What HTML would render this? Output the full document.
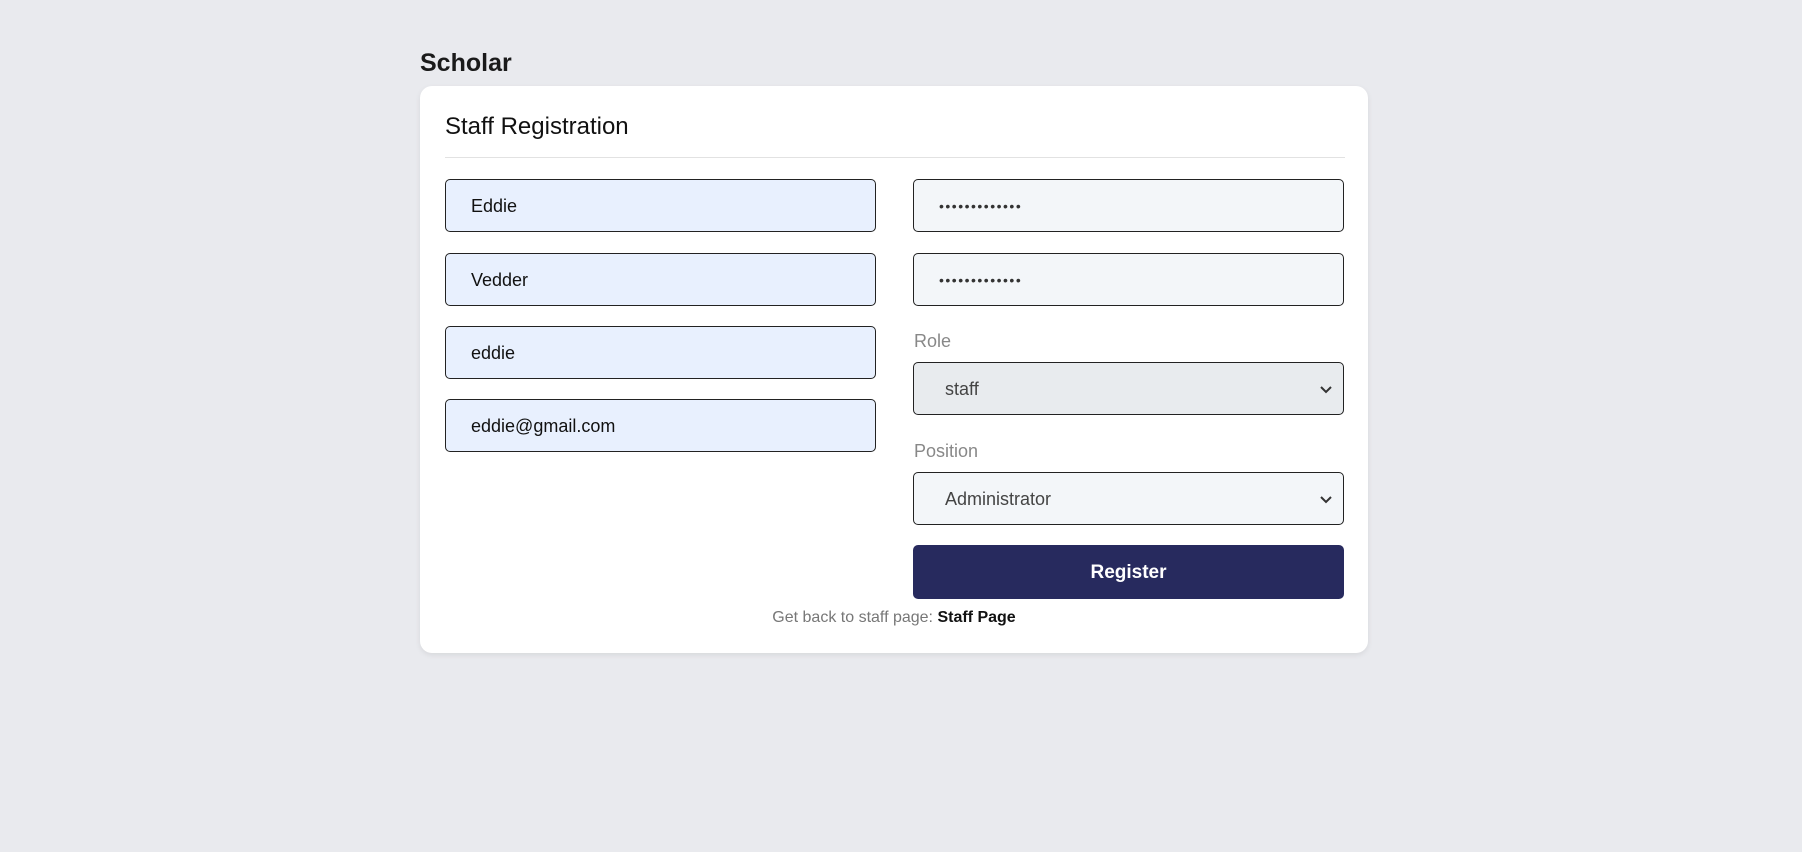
<!DOCTYPE html>
<html><head><style>
*{box-sizing:border-box;margin:0;padding:0}
body{width:1802px;height:852px;background:#e9eaee;font-family:"Liberation Sans",sans-serif;position:relative;overflow:hidden}
.abs{position:absolute}
.brand{left:420px;top:49px;font-size:25px;font-weight:bold;color:#1a1a1a}
.card{left:420px;top:86px;width:948px;height:567px;background:#fff;border-radius:12px;box-shadow:0 2px 6px rgba(0,0,0,.08)}
.title{left:445px;top:113px;font-size:24px;color:#111}
.hr{left:445px;top:157px;width:900px;height:1px;background:#e2e2e2}
.in{width:431px;height:53px;border:1.5px solid #222;border-radius:5px;font-size:18px;color:#111;padding-left:25px;line-height:53px}
.l{left:445px;background:#e8f0fe}
.r{left:913px;background:#f3f6f9}
.lab{left:914px;font-size:18px;color:#888}
.sel{color:#444;padding-left:31px}
.chev{position:absolute;right:10px;top:19px}
.btn{left:913px;top:545px;width:431px;height:54px;background:#272a5e;border-radius:5px;color:#fff;font-weight:bold;font-size:19px;text-align:center;line-height:56px}
.link{top:609px;font-size:16px;color:#777;text-align:center}
.link b{color:#111}
</style></head><body>
<div class="abs brand">Scholar</div>
<div class="abs card"></div>
<div class="abs title">Staff Registration</div>
<div class="abs hr"></div>
<div class="abs in l" style="top:179px">Eddie</div>
<div class="abs in l" style="top:253px">Vedder</div>
<div class="abs in l" style="top:326px">eddie</div>
<div class="abs in l" style="top:399px">eddie@gmail.com</div>
<div class="abs in r" style="top:179px;letter-spacing:1.5px;font-size:14px;color:#333">•••••••••••••</div>
<div class="abs in r" style="top:253px;letter-spacing:1.5px;font-size:14px;color:#333">•••••••••••••</div>
<div class="abs lab" style="top:331px">Role</div>
<div class="abs in r sel" style="top:362px;background:#e8ebee">staff<svg class="chev" width="14" height="14" viewBox="0 0 14 14"><path d="M2 5l5 5 5-5" fill="none" stroke="#333" stroke-width="2"/></svg></div>
<div class="abs lab" style="top:441px">Position</div>
<div class="abs in r sel" style="top:472px">Administrator<svg class="chev" width="14" height="14" viewBox="0 0 14 14"><path d="M2 5l5 5 5-5" fill="none" stroke="#333" stroke-width="2"/></svg></div>
<div class="abs btn">Register</div>
<div class="abs link" style="left:0;width:1788px">Get back to staff page: <b>Staff Page</b></div>
</body></html>
